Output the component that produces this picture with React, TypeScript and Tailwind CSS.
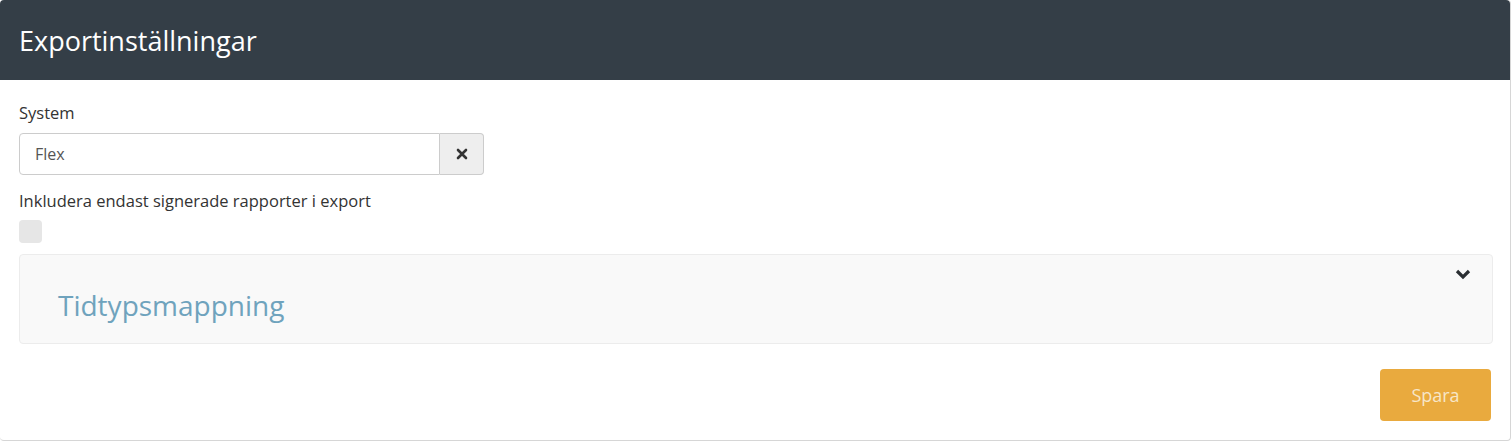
export default function App() {
  return (
    <div className="w-[1511px] font-['Open_Sans',sans-serif]">
      <div className="h-[441px] rounded-[4px] border-r border-b border-[#d6d6d6] bg-white">
        <div className="flex h-20 items-center rounded-t-[4px] bg-[#343e47] px-[19px]">
          <h1 className="text-[27px] font-normal leading-none text-white">
            Exportinställningar
          </h1>
        </div>

        <div className="px-[19px] pt-[23px]">
          <label className="block text-[16.5px] leading-5 text-[#333]">System</label>
          <div className="mt-[10px] flex h-[42px] w-[465px]">
            <input
              readOnly
              value="Flex"
              className="h-full flex-1 rounded-l-[4px] border border-[#ccc] px-[15px] text-[16px] text-[#555] outline-none"
            />
            <button className="flex h-full w-11 items-center justify-center rounded-r-[4px] border border-l-0 border-[#ccc] bg-[#eee]">
              <svg width="12" height="12" viewBox="0 0 12 12">
                <path
                  d="M2 2L10 10M10 2L2 10"
                  stroke="#333"
                  strokeWidth="2.6"
                  strokeLinecap="round"
                />
              </svg>
            </button>
          </div>

          <label className="mt-[16px] block text-[16.5px] leading-5 text-[#333]">
            Inkludera endast signerade rapporter i export
          </label>
          <div className="mt-[9px] h-[23px] w-[23px] rounded-[4px] bg-[#e6e6e6]" />

          <div className="mt-[11px] flex h-[90px] w-[1474px] items-start justify-between rounded-[4px] border border-[#ececec] bg-[#f9f9f9] pl-[38px] pr-[21px]">
            <h2 className="mt-[36px] text-[28px] font-normal leading-none text-[#6fa3bd]">
              Tidtypsmappning
            </h2>
            <svg className="mt-[14px]" width="16" height="11" viewBox="0 0 16 11">
              <path d="M2 2L8 8L14 2" fill="none" stroke="#2b2f33" strokeWidth="3.2" />
            </svg>
          </div>

          <div className="mt-[25px] flex w-[1472px] justify-end">
            <button className="h-[52px] w-[111px] rounded-[4px] bg-[#e9aa3e] text-[18px] text-[#f7e6c8]">
              Spara
            </button>
          </div>
        </div>
      </div>
    </div>
  );
}
